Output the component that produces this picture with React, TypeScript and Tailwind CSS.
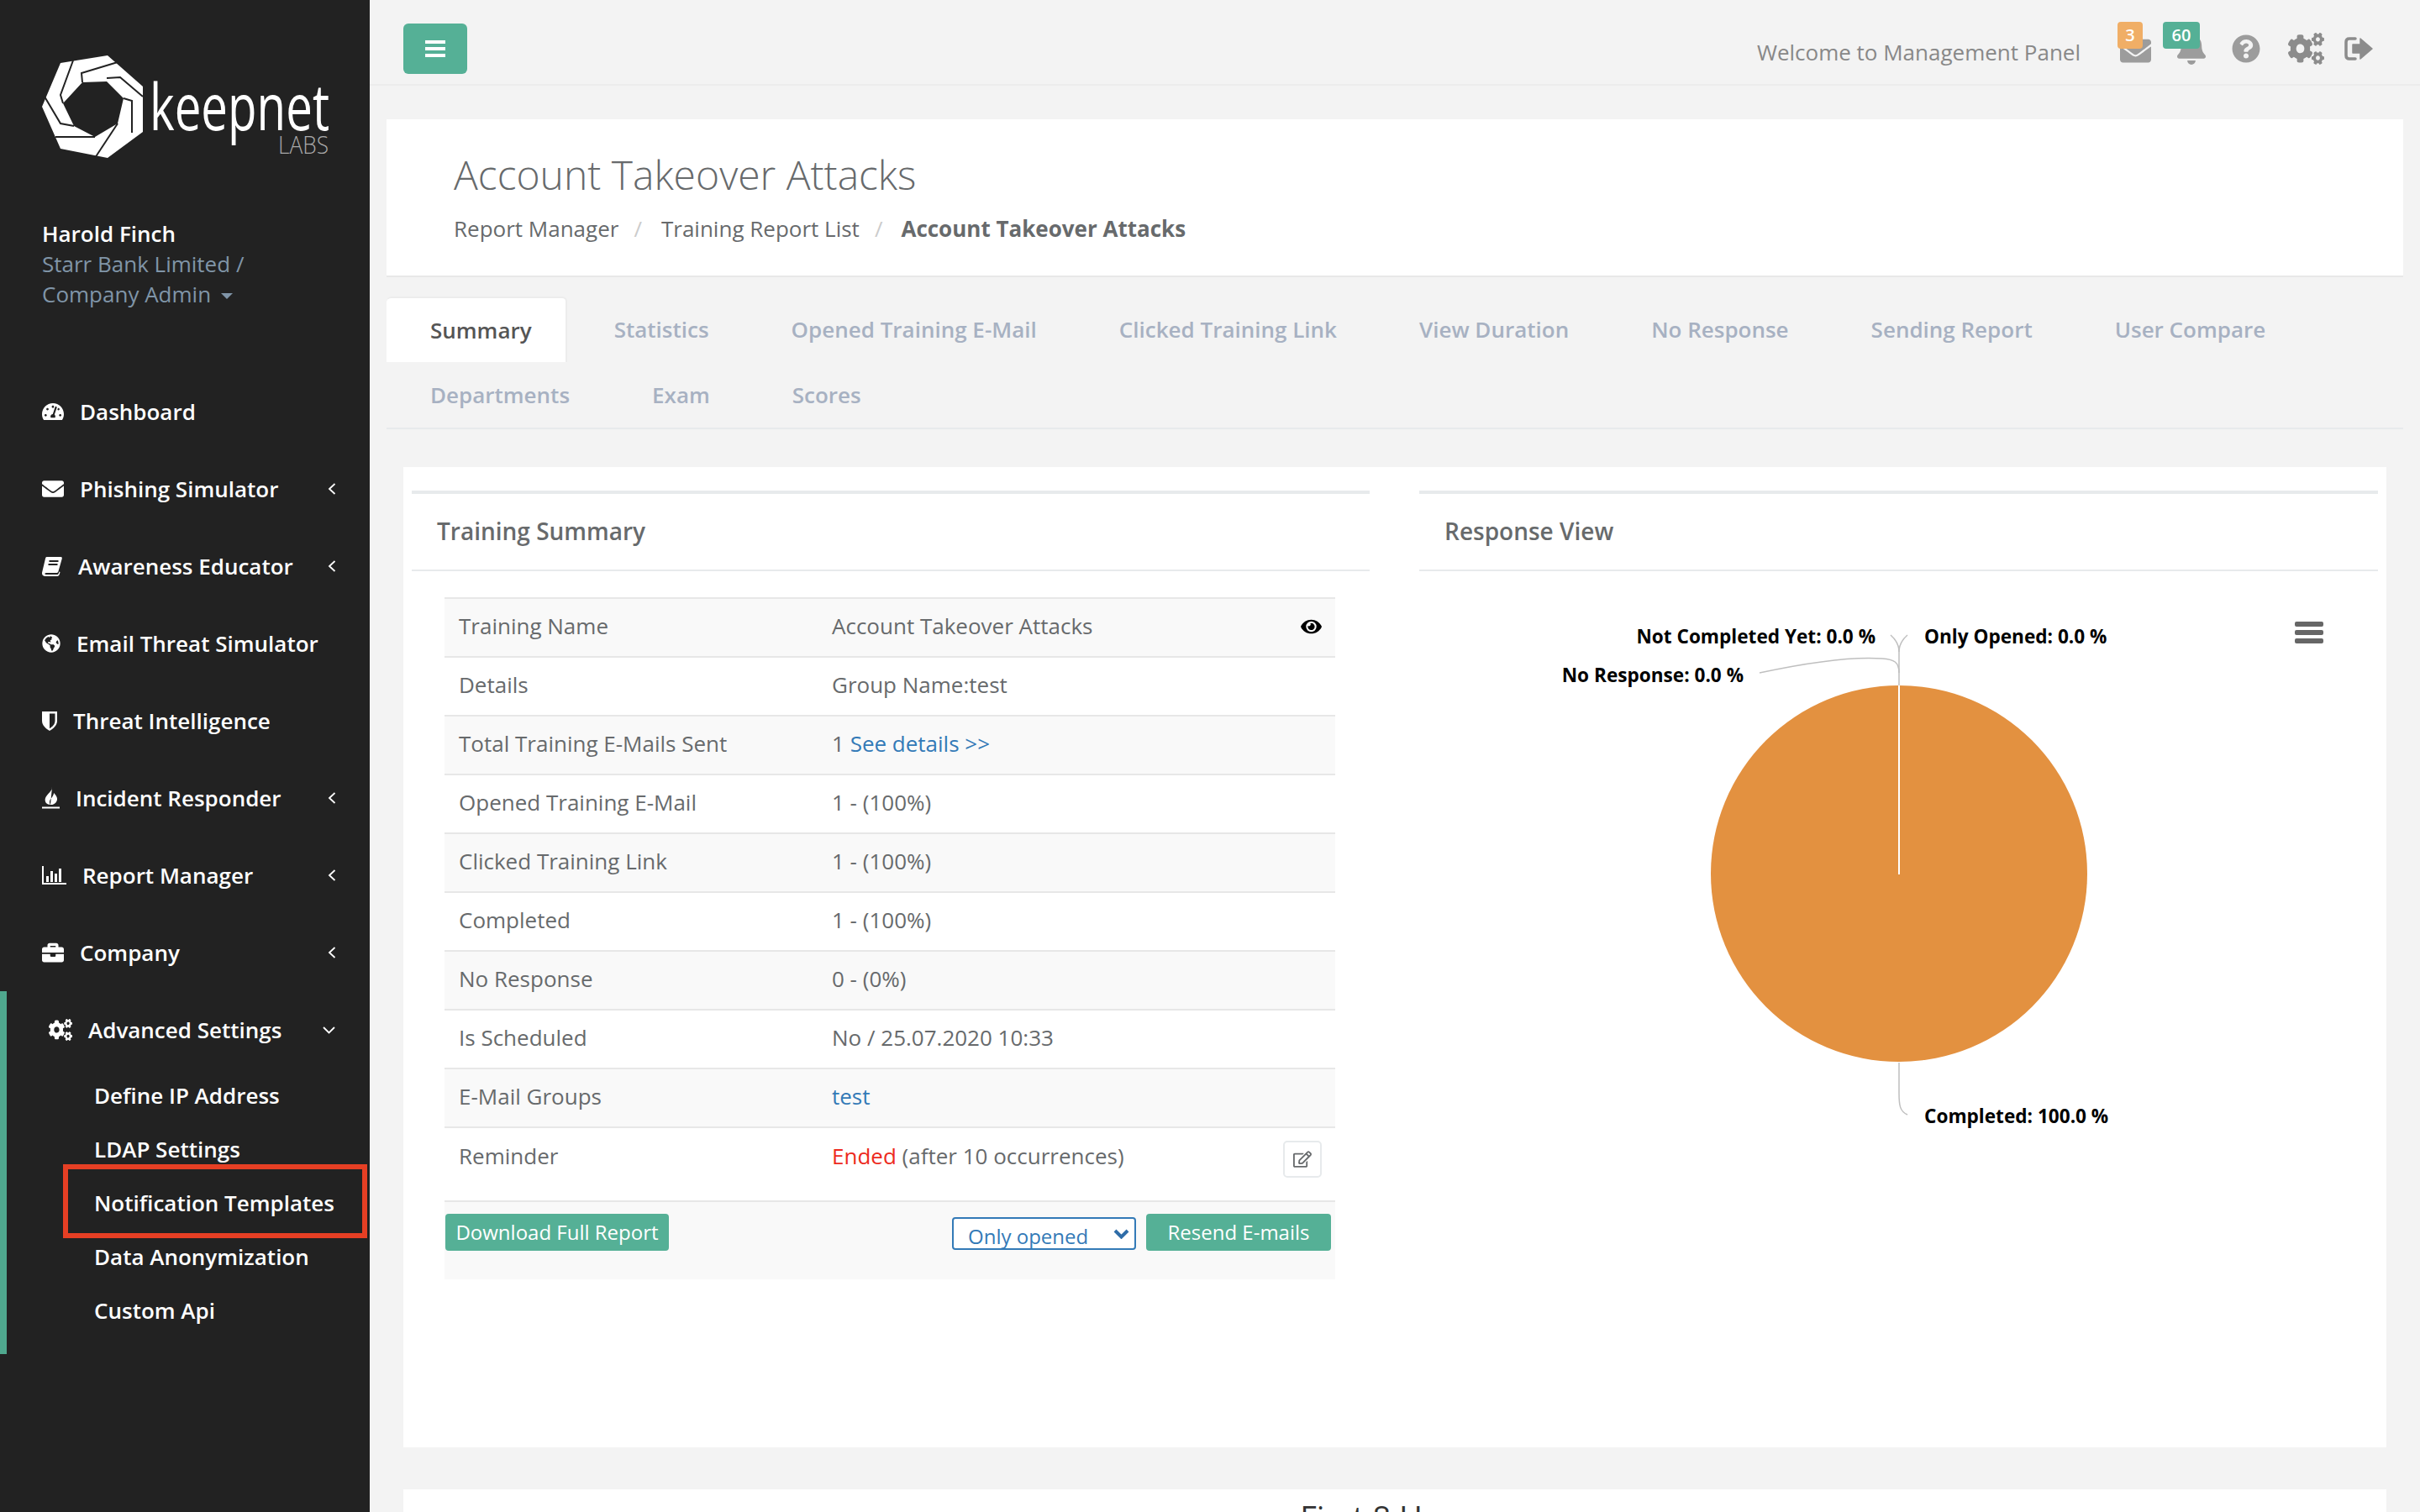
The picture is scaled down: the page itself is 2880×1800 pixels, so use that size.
import React from "react";
import {
  FaTachometerAlt, FaEnvelope, FaGlobeAmericas, FaBriefcase, FaCogs,
  FaBell, FaQuestionCircle, FaEye, FaRegEdit,
} from "react-icons/fa";

function Flame({ className }: { className?: string }) {
  return (
    <svg viewBox="0 0 21 26" className={className} fill="currentColor">
      <path d="M12 0C13 4 6 8 4 13C2.500 18 6 21 10 21C8 18 9 15 12 12C13 10 14 9 14 7C16 9 18.500 12 18 15C17.500 18 15.500 20 12.500 21L10 21Z" />
      <rect x="0" y="23.500" width="21" height="2" />
    </svg>
  );
}

function Bars({ className }: { className?: string }) {
  return (
    <svg viewBox="0 0 29 22" className={className} fill="currentColor">
      <rect x="0" y="0" width="2" height="22" />
      <rect x="0" y="20" width="29" height="2" />
      <rect x="5" y="12" width="3" height="7" />
      <rect x="10" y="6" width="3" height="13" />
      <rect x="15" y="9" width="3" height="10" />
      <rect x="20" y="3" width="3" height="16" />
    </svg>
  );
}

function Book({ className }: { className?: string }) {
  return (
    <svg viewBox="0 0 24 23" className={className}>
      <path
        fill="currentColor"
        d="M5.500 0H22.500C24 0 24 1.500 23.500 3L19.500 17C19 18.500 18.500 19 17 19H5C3.500 19 3 20 3.500 20.500C4 21 5 21 6 21H18C19 21 19.500 20.500 20 19L20.500 17.500L21.500 18L21 20C20.500 22 19.500 23 18 23H4C1.500 23 0 21.500 0 19.500C0 19 0 18.500 .2 18L4 2C4.300 .8 4.800 0 5.500 0Z"
      />
      <path d="M8.500 5H19.500M7.500 9H18.500" stroke="#222222" strokeWidth="2" />
    </svg>
  );
}

function Shield({ className }: { className?: string }) {
  return (
    <svg viewBox="0 0 18 23" className={className}>
      <path fill="currentColor" d="M0 0H18V11C18 17 13 20.500 9 23C5 20.500 0 17 0 11Z" />
      <path fill="#222222" d="M9 2.500H15.500V11C15.500 15.500 12 18.300 9 20.200Z" />
    </svg>
  );
}

function SignOut({ className }: { className?: string }) {
  return (
    <svg viewBox="0 0 34 28" className={className}>
      <path d="M13 2H6C3.500 2 2 3.500 2 6V22C2 24.500 3.500 26 6 26H13" fill="none" stroke="currentColor" strokeWidth="3.500" strokeLinecap="round" />
      <path d="M10 9H19V2L33 14L19 26V19H10Z" fill="currentColor" stroke="currentColor" strokeWidth="1.500" strokeLinejoin="round" />
    </svg>
  );
}

function ChevLeft() {
  return (
    <svg viewBox="0 0 10 14" className="ml-auto w-[10px] h-[14px]" fill="none" stroke="currentColor" strokeWidth="1.800">
      <path d="M8.500 1L2 7L8.500 13" />
    </svg>
  );
}

function ChevDown() {
  return (
    <svg viewBox="0 0 15 9" className="ml-auto w-[15px] h-[9px]" fill="none" stroke="currentColor" strokeWidth="1.800">
      <path d="M1 1L7.500 7.500L14 1" />
    </svg>
  );
}

function Logo() {
  return (
    <svg viewBox="50 66 342 122" className="w-[342px] h-[122px] overflow-visible">
      <path
        fill="#fff"
        fillRule="evenodd"
        d="M128 66L170 103V157L128 188L72 177L50 127L72 75ZM127 97L98 98L75 123L88 150L113 163L140 147L147 117Z"
      />
      <g fill="none" stroke="#222" strokeWidth="2">
        <path d="M127 93L143 92L170 115" />
        <path d="M147 117L157 120V158" />
        <path d="M140 147L113 188" />
        <path d="M113 163L66 163" />
        <path d="M88 150L72 147L53 115" />
        <path d="M75 123L72 113L87 72" />
        <path d="M98 98L97 87L140 74" />
      </g>
      <text x="178" y="155" fill="#fff" fontSize="76" fontWeight="400" textLength="214" lengthAdjust="spacingAndGlyphs">keepnet</text>
      <text x="331" y="183" fill="#a9a9a9" fontSize="30" fontWeight="300" textLength="60" lengthAdjust="spacingAndGlyphs">LABS</text>
    </svg>
  );
}

const nav = [
  { label: "Dashboard", icon: <FaTachometerAlt className="w-[26px] h-[26px]" /> },
  { label: "Phishing Simulator", icon: <FaEnvelope className="w-[26px] h-[26px]" />, arrow: true },
  { label: "Awareness Educator", icon: <Book className="w-[24px] h-[23px]" />, arrow: true },
  { label: "Email Threat Simulator", icon: <FaGlobeAmericas className="w-[22px] h-[22px]" /> },
  { label: "Threat Intelligence", icon: <Shield className="w-[18px] h-[23px]" /> },
  { label: "Incident Responder", icon: <Flame className="w-[21px] h-[26px]" />, arrow: true },
  { label: "Report Manager", icon: <Bars className="w-[29px] h-[22px]" />, arrow: true },
  { label: "Company", icon: <FaBriefcase className="w-[26px] h-[26px]" />, arrow: true },
];

const subs = ["Define IP Address", "LDAP Settings", "Notification Templates", "Data Anonymization", "Custom Api"];

function Sidebar() {
  return (
    <aside className="w-[440px] h-full shrink-0 bg-[#222222] text-white">
      <div className="pt-[66px] pl-[50px]">
        <Logo />
      </div>
      <div className="mt-[72px] pl-[50px] text-[26px] leading-[36px] text-[#8095a8]">
        <div className="font-semibold text-white">Harold Finch</div>
        <div>Starr Bank Limited /</div>
        <div className="flex items-center">
          Company Admin
          <span className="ml-[12px] mt-[4px] border-x-[7px] border-x-transparent border-t-[7px] border-t-[#8095a8]" />
        </div>
      </div>
      <nav className="mt-[76px] text-[26px] font-semibold">
        {nav.map((n) => (
          <div key={n.label} className="h-[92px] flex items-center pl-[50px] pr-[40px]">
            <div className="flex items-center gap-[19px]">
              {n.icon}
              <span>{n.label}</span>
            </div>
            {n.arrow && <ChevLeft />}
          </div>
        ))}
        <div className="border-l-[8px] border-[#4fa88e] pb-[20px]">
          <div className="h-[92px] flex items-center pl-[50px] pr-[41px]">
            <div className="flex items-center gap-[19px]">
              <FaCogs className="w-[28px] h-[26px]" preserveAspectRatio="none" />
              <span>Advanced Settings</span>
            </div>
            <ChevDown />
          </div>
          {subs.map((s) => (
            <div key={s} className="relative h-[64px] flex items-center pl-[104px]">
              {s}
              {s === "Notification Templates" && (
                <div className="absolute left-[67px] top-[-14px] w-[362px] h-[88px] border-[6px] border-[#e63f24]" />
              )}
            </div>
          ))}
        </div>
      </nav>
    </aside>
  );
}

function TopBar() {
  return (
    <header className="h-[102px] border-b-2 border-[#ececec] flex items-start pl-[40px] pr-[56px]">
      <button className="mt-[28px] w-[76px] h-[60px] rounded-[6px] bg-[#55b096] flex flex-col items-center justify-center gap-[4px]">
        <span className="block w-[24px] h-[4px] bg-white" />
        <span className="block w-[24px] h-[4px] bg-white" />
        <span className="block w-[24px] h-[4px] bg-white" />
      </button>
      <div className="ml-auto mt-[44px] text-[26px] leading-[36px] text-[#888888]">Welcome to Management Panel</div>
      <div className="relative ml-[47px] mt-[42px] text-[#9c9c9c]">
        <FaEnvelope className="w-[37px] h-[37px]" />
        <span className="absolute left-[-3px] top-[-16px] w-[30px] h-[32px] rounded-[4px] bg-[#f0ae66] text-white text-[20px] font-semibold flex items-center justify-center">3</span>
      </div>
      <div className="relative ml-[31px] mt-[38px] text-[#9c9c9c]">
        <FaBell className="w-[34px] h-[39px]" />
        <span className="absolute left-[-17px] top-[-12px] w-[44px] h-[32px] rounded-[4px] bg-[#55b096] text-white text-[20px] font-semibold flex items-center justify-center">60</span>
      </div>
      <FaQuestionCircle className="ml-[31px] mt-[41px] w-[34px] h-[34px] text-[#9c9c9c]" />
      <FaCogs className="ml-[33px] mt-[39px] w-[43px] h-[38px] text-[#8c8c8c]" preserveAspectRatio="none" />
      <SignOut className="ml-[24px] mt-[44px] w-[34px] h-[28px] text-[#8c8c8c]" />
    </header>
  );
}

function PageHeader() {
  return (
    <section className="mt-[40px] mx-[20px] h-[188px] bg-white border-b-2 border-[#e8e8e8] pl-[80px] pt-[38px]">
      <h1 className="text-[48px] leading-[56px] font-light text-[#676a6c]">Account Takeover Attacks</h1>
      <div className="mt-[18px] flex text-[26px] leading-[36px] text-[#676a6c]">
        <span>Report Manager</span>
        <span className="ml-[18px] mr-[23px] text-[#cccccc]">/</span>
        <span>Training Report List</span>
        <span className="ml-[18px] mr-[22px] text-[#cccccc]">/</span>
        <span className="font-bold">Account Takeover Attacks</span>
      </div>
    </section>
  );
}

const tabsA = ["Statistics", "Opened Training E-Mail", "Clicked Training Link", "View Duration", "No Response", "Sending Report", "User Compare"];
const tabsB = ["Departments", "Exam", "Scores"];

function Tabs() {
  return (
    <div className="mt-[23px] mx-[20px] border-b-2 border-[#e7eaec] text-[26px] font-semibold text-[#a7b1c2]">
      <div className="flex h-[78px]">
        <div className="mr-[7px] pl-[52px] pr-[40px] flex items-center bg-white rounded-t-[6px] border-t-2 border-r-2 border-[#ececec] text-[#555555]">Summary</div>
        {tabsA.map((t) => (
          <div key={t} className="px-[49px] flex items-center">{t}</div>
        ))}
      </div>
      <div className="flex h-[78px] pl-[3px]">
        {tabsB.map((t) => (
          <div key={t} className="px-[49px] flex items-center">{t}</div>
        ))}
      </div>
    </div>
  );
}

const rows: { k: string; v: React.ReactNode; eye?: boolean }[] = [
  { k: "Training Name", v: "Account Takeover Attacks", eye: true },
  { k: "Details", v: "Group Name:test" },
  { k: "Total Training E-Mails Sent", v: <>1 <span className="text-[#337ab7]">See details &gt;&gt;</span></> },
  { k: "Opened Training E-Mail", v: "1 - (100%)" },
  { k: "Clicked Training Link", v: "1 - (100%)" },
  { k: "Completed", v: "1 - (100%)" },
  { k: "No Response", v: "0 - (0%)" },
  { k: "Is Scheduled", v: "No / 25.07.2020 10:33" },
  { k: "E-Mail Groups", v: <span className="text-[#337ab7]">test</span> },
];

function Panel({ title, children, className }: { title: string; children: React.ReactNode; className: string }) {
  return (
    <div className={className}>
      <div className="h-[96px] border-t-4 border-b-2 border-[#e7eaec] flex items-center pl-[30px] pb-[3px] text-[28px] font-semibold text-[#676a6c]">
        {title}
      </div>
      {children}
    </div>
  );
}

function SummaryTable() {
  return (
    <div className="mt-[31px] ml-[39px] w-[1060px] text-[26px] text-[#676a6c]">
      {rows.map((r, i) => (
        <div key={r.k} className={`h-[70px] border-t-2 border-[#e7e7e7] flex items-center pb-[3px] ${i % 2 === 0 ? "bg-[#f9f9f9]" : "bg-white"}`}>
          <div className="w-[461px] pl-[17px]">{r.k}</div>
          <div>{r.v}</div>
          {r.eye && <FaEye className="ml-auto mr-[15px] w-[27px] h-[22px] text-black" />}
        </div>
      ))}
      <div className="h-[88px] border-t-2 border-[#e7e7e7] flex items-start bg-white">
        <div className="w-[461px] pl-[17px] mt-[14px]">Reminder</div>
        <div className="mt-[14px]"><span className="text-[#ed2a20]">Ended</span> (after 10 occurrences)</div>
        <button className="ml-auto mr-[16px] mt-[15px] w-[46px] h-[44px] rounded-[5px] border-2 border-[#e7eaec] flex items-center justify-center">
          <FaRegEdit className="w-[22px] h-[20px] text-[#676a6c]" />
        </button>
      </div>
      <div className="h-[94px] border-t-2 border-[#e7e7e7] bg-[#f9f9f9] flex items-start pt-[14px] pr-[5px] text-white">
        <button className="ml-[1px] h-[44px] w-[266px] rounded-[4px] bg-[#55b096] text-[24px]">Download Full Report</button>
        <div className="relative ml-auto mt-[4px]">
          <select className="appearance-none w-[219px] h-[39px] pl-[17px] pt-[6px] rounded-[4px] border-2 border-[#337ab7] bg-white text-[24px] leading-[30px] text-[#337ab7] outline-none">
            <option>Only opened</option>
          </select>
          <svg viewBox="0 0 19 12" className="absolute right-[8px] top-[14px] w-[19px] h-[12px] text-[#2f6da8]" fill="none" stroke="currentColor" strokeWidth="4">
            <path d="M2 2L9.500 9.500L17 2" />
          </svg>
        </div>
        <button className="ml-[12px] h-[44px] w-[220px] rounded-[4px] bg-[#55b096] text-[24px]">Resend E-mails</button>
      </div>
    </div>
  );
}

function PieChart() {
  const label = "fill-black text-[22.6px] font-bold";
  return (
    <svg viewBox="1689 679 1141 700" className="block w-[1141px] h-[700px]">
      <circle cx="2260" cy="1039" r="224" fill="#e39140" />
      <path d="M2260 815V1040" stroke="#fff" strokeWidth="2" />
      <g fill="none" stroke="#bfbfbf" strokeWidth="1.500">
        <path d="M2260 815V775C2260 768 2258 762 2250 755" />
        <path d="M2260 775C2260 768 2262 762 2270 755" />
        <path d="M2094 800C2150 788 2200 780 2240 783C2254 784 2260 787 2260 800" />
        <path d="M2260 1264V1300C2260 1315 2261 1322 2270 1326" />
      </g>
      <text x="2232" y="765" textAnchor="end" className={label}>Not Completed Yet: 0.0 %</text>
      <text x="2290" y="765" className={label}>Only Opened: 0.0 %</text>
      <text x="2075" y="811" textAnchor="end" className={label}>No Response: 0.0 %</text>
      <text x="2290" y="1336" className={label}>Completed: 100.0 %</text>
      <g fill="#666666">
        <rect x="2731" y="739" width="34" height="6" rx="2" />
        <rect x="2731" y="749" width="34" height="6" rx="2" />
        <rect x="2731" y="759" width="34" height="6" rx="2" />
      </g>
    </svg>
  );
}

export default function App() {
  return (
    <div className="flex h-[1800px] w-[2880px] overflow-hidden bg-[#f3f3f3] font-['Open_Sans',sans-serif]">
      <Sidebar />
      <main className="flex-1 min-w-0">
        <TopBar />
        <PageHeader />
        <Tabs />
        <section className="mt-[45px] mx-[40px] h-[1167px] bg-white pt-[28px] px-[10px] flex justify-between">
          <Panel title="Training Summary" className="w-[1140px]">
            <SummaryTable />
          </Panel>
          <Panel title="Response View" className="w-[1141px]">
            <PieChart />
          </Panel>
        </section>
        <section className="mt-[50px] mx-[40px] h-[200px] bg-white pt-[10px] text-center text-[38px] leading-[46px] text-[#333333]">
          First 8 Hours
        </section>
      </main>
    </div>
  );
}
